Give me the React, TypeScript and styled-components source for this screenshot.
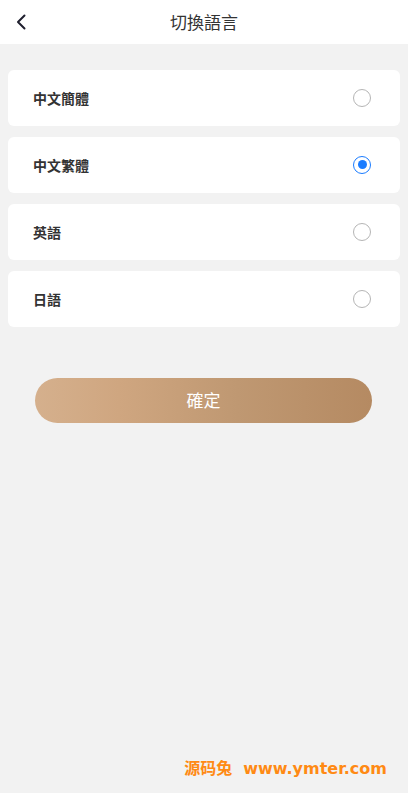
import React, { useState } from 'react';
import styled, { createGlobalStyle } from 'styled-components';

const GlobalStyle = createGlobalStyle`
  html, body {
    margin: 0;
    padding: 0;
    background: #f2f2f2;
    font-family: 'Noto Sans CJK TC', 'Noto Sans CJK SC', 'Noto Sans', sans-serif;
  }
`;

const Page = styled.div`
  width: 408px;
  height: 793px;
  display: flex;
  flex-direction: column;
  background: #f2f2f2;
  position: relative;
`;

const Header = styled.div`
  height: 44px;
  background: #ffffff;
  display: flex;
  align-items: center;
  justify-content: center;
  position: relative;
  .back {
    position: absolute;
    left: 12px;
    top: 12px;
    width: 20px;
    height: 20px;
  }
  .title {
    font-size: 17px;
    color: #333333;
    line-height: 44px;
  }
`;

const List = styled.div`
  display: flex;
  flex-direction: column;
  gap: 11px;
  padding: 26px 8px 0;
`;

const Item = styled.div`
  height: 56px;
  box-sizing: border-box;
  background: #ffffff;
  border-radius: 6px;
  display: flex;
  align-items: center;
  justify-content: space-between;
  padding: 0 29px 0 25px;
  cursor: pointer;
  .name {
    font-size: 14px;
    font-weight: 700;
    color: #333333;
    line-height: 1;
    margin-top: -1px;
  }
`;

const Radio = styled.div<{ $on: boolean }>`
  width: 18px;
  height: 18px;
  box-sizing: border-box;
  border-radius: 50%;
  border: 1px solid ${(p) => (p.$on ? '#1a7cff' : '#b5b5b5')};
  display: flex;
  align-items: center;
  justify-content: center;
  margin-top: -1px;
  &::after {
    content: '';
    width: 9px;
    height: 9px;
    border-radius: 50%;
    background: #1a7cff;
    display: ${(p) => (p.$on ? 'block' : 'none')};
  }
`;

const Confirm = styled.button`
  margin: 51px 36px 0 35px;
  height: 45px;
  padding: 0 0 3px;
  border: none;
  border-radius: 23px;
  background: linear-gradient(90deg, #d5b08d 0%, #cfa680 25%, #bf9872 60%, #b58a62 100%);
  color: #ffffff;
  font-size: 17px;
  line-height: 1;
  font-family: 'Noto Sans CJK TC', sans-serif;
  cursor: pointer;
`;

const Watermark = styled.div`
  position: absolute;
  right: 21px;
  bottom: 14px;
  display: flex;
  gap: 11px;
  align-items: baseline;
  color: #ff8a14;
  font-weight: 700;
  .cn {
    font-size: 16px;
    font-family: 'Noto Sans CJK SC', sans-serif;
  }
  .url {
    font-size: 16px;
    font-family: 'DejaVu Sans', sans-serif;
  }
`;

const langs = ['中文簡體', '中文繁體', '英語', '日語'];

const App = () => {
  const [sel, setSel] = useState(1);
  return (
    <Page>
      <GlobalStyle />
      <Header>
        <svg className="back" viewBox="0 0 20 20" fill="none">
          <path d="M12.5 3.5L6 10l6.5 6.5" stroke="#1f1f2e" strokeWidth="2" strokeLinecap="round" strokeLinejoin="round" />
        </svg>
        <span className="title">切換語言</span>
      </Header>
      <List>
        {langs.map((l, i) => (
          <Item key={l} onClick={() => setSel(i)}>
            <span className="name">{l}</span>
            <Radio $on={sel === i} />
          </Item>
        ))}
      </List>
      <Confirm>確定</Confirm>
      <Watermark>
        <span className="cn">源码兔</span>
        <span className="url">www.ymter.com</span>
      </Watermark>
    </Page>
  );
};

export default App;
